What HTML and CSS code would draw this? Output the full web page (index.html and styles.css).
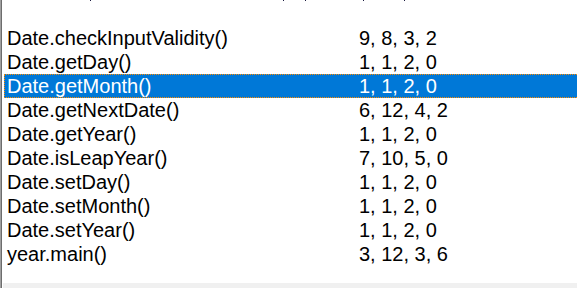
FILE: index.html
```html
<!DOCTYPE html>
<html>
<head>
<meta charset="utf-8">
<link rel="stylesheet" href="styles.css">
</head>
<body>
<div class="panel">
  <div class="marks">
    <span class="mark m1"></span>
    <span class="mark m2"></span>
    <span class="mark m3"></span>
    <span class="mark m4"></span>
    <span class="mark m5"></span>
  </div>
  <div class="list">
    <div class="row"><span class="name">Date.checkInputValidity()</span><span class="val">9, 8, 3, 2</span></div>
    <div class="row"><span class="name">Date.getDay()</span><span class="val">1, 1, 2, 0</span></div>
    <div class="row selected"><span class="name">Date.getMonth()</span><span class="val">1, 1, 2, 0</span></div>
    <div class="row"><span class="name">Date.getNextDate()</span><span class="val">6, 12, 4, 2</span></div>
    <div class="row"><span class="name">Date.getYear()</span><span class="val">1, 1, 2, 0</span></div>
    <div class="row"><span class="name">Date.isLeapYear()</span><span class="val">7, 10, 5, 0</span></div>
    <div class="row"><span class="name">Date.setDay()</span><span class="val">1, 1, 2, 0</span></div>
    <div class="row"><span class="name">Date.setMonth()</span><span class="val">1, 1, 2, 0</span></div>
    <div class="row"><span class="name">Date.setYear()</span><span class="val">1, 1, 2, 0</span></div>
    <div class="row"><span class="name">year.main()</span><span class="val">3, 12, 3, 6</span></div>
  </div>
  <div class="footer"></div>
</div>
</body>
</html>
```
FILE: styles.css
```css
html, body {
  margin: 0;
  padding: 0;
  background: #ffffff;
}
body {
  width: 577px;
  height: 288px;
  overflow: hidden;
  font-family: "Liberation Sans", Arial, sans-serif;
}
.panel {
  height: 288px;
  display: flex;
  flex-direction: column;
  border-left: 1px solid #a0a0a0;
  box-shadow: inset 1px 0 0 #6d6d6d;
  box-sizing: border-box;
}
.marks {
  height: 2px;
  position: relative;
}
.mark {
  position: absolute;
  top: 0;
  width: 1px;
  height: 1px;
  background: #1a1a40;
}
.m1 { left: 89px; }
.m2 { left: 282px; }
.m3 { left: 304px; }
.m4 { left: 362px; }
.m5 { left: 403px; }
.list {
  flex: 1;
  padding-top: 24px;
  padding-left: 3px;
}
.row {
  display: grid;
  grid-template-columns: 352px 1fr;
  height: 24px;
  line-height: 24px;
  font-size: 20px;
  color: #000000;
  padding-left: 3px;
  box-sizing: border-box;
  white-space: nowrap;
}
.row.selected {
  background: #0078d7;
  color: #ffffff;
  border: 1px dotted #ff8c00;
  border-right: none;
  padding-left: 2px;
  line-height: 22px;
}
.footer {
  height: 5px;
  margin-left: 2px;
  background: #f0f0f0;
}
```
